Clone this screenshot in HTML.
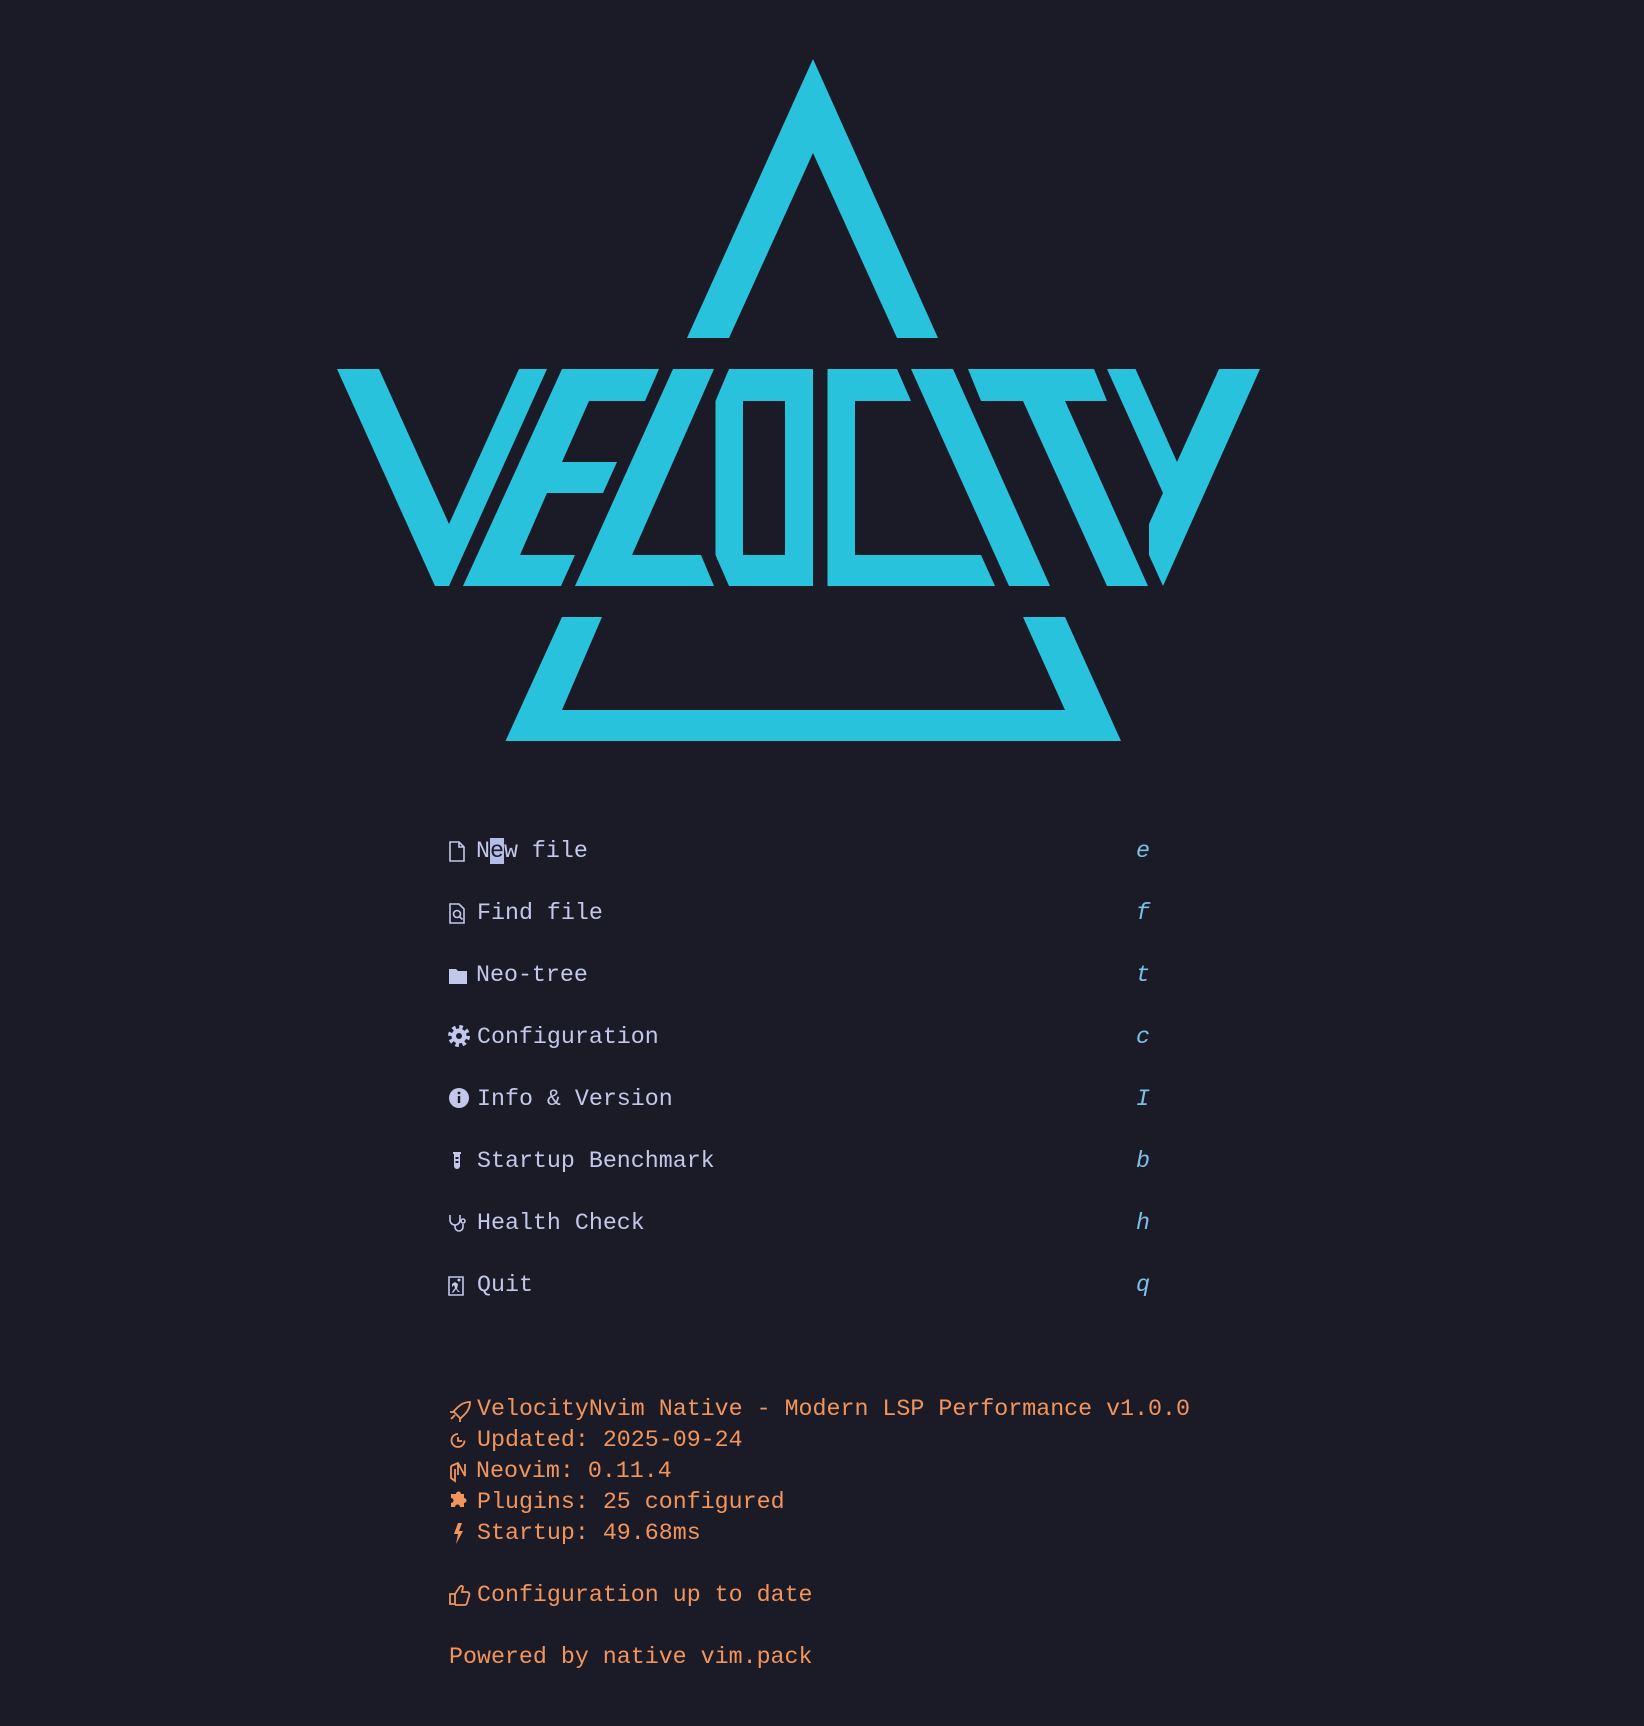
<!DOCTYPE html>
<html><head><meta charset="utf-8"><style>
html,body{margin:0;padding:0;background:#1b1b27;}
body{width:1644px;height:1726px;position:relative;overflow:hidden;font-family:"Liberation Mono","DejaVu Sans Mono",monospace;font-size:23.3px;}
.r{position:absolute;height:31px;line-height:31px;white-space:pre;}
.m{color:#c3c8ea;}
.k{color:#7cc0e6;font-style:italic;}
.o{color:#f2955c;}
.cur{background:#b4bce8;color:#1b1b27;}
</style></head><body>
<svg width="1644" height="1726" style="position:absolute;left:0;top:0" viewBox="0 0 1644 1726">
<g fill="#29c2dd">
<polygon points="813,59 938,338 897,338 813,153 729,338 687,338"/>
<polygon points="337,369 379,369 449,524 519,369 547,369 449,586 435,586"/>
<polygon points="562,369 659,369 645,401 589,401 562,462 617,462 603,493 547,493 520,555 575,555 561,586 463,586"/>
<polygon points="673,369 714,369 632,555 701,555 714,586 575,586"/>
<path fill-rule="evenodd" d="M729,369 H813 V586 H729 L715.5,555 V401 Z M743,401 H785 V555 H743 Z"/>
<polygon points="827.5,369 897,369 911,401 855,401 855,555 981,555 995,586 827.5,586"/>
<polygon points="911,369 953,369 1050,586 1009,586"/>
<polygon points="968,369 1094,369 1107,401 1065,401 1148,586 1107,586 1023,401 981,401"/>
<polygon points="1107,369 1135.5,369 1177,462 1219,369 1260,369 1163,586 1149,555 1149,524 1163,493"/>
<polygon points="562,617 602,617 562,710 1065,710 1023,617 1065,617 1121,741 505.5,741"/>
</g>
<g transform="translate(0,2)">
<g fill="none" stroke="#c3c8ea" stroke-width="1.6">
<path d="M450,840 h9 l5,5 v14 h-14 z M459,840 v5 h5"/>
<path d="M450,902 h9 l5,5 v14 h-14 z"/><circle cx="457" cy="912" r="3.5"/><path d="M459.5,914.5 l3,3"/>
<path d="M450,1213 v5 a5,5 0 0 0 10,0 v-5 M455,1223 v2 a4,4 0 0 0 8,0 v-3"/><circle cx="463" cy="1219" r="2"/>
<path d="M449,1275 h14 v18 h-14 z"/>
</g>
<g fill="#c3c8ea">
<path d="M449,967 h7 l2,2 h9 v13 h-18 z"/>
<circle cx="459" cy="1034" r="7.5"/>
<circle cx="459" cy="1034" r="9" fill="none" stroke="#c3c8ea" stroke-width="4" stroke-dasharray="3.5 3.57"/>
<circle cx="459" cy="1096" r="10"/>
<path d="M453,1150 h8 v2 h-1 v12 a3,3 0 0 1 -6,0 v-12 h-1 z"/>
<path d="M455,1280 l3,2 -1,5 3,3 -2,0 -2,-3 -3,4 -1,-1 3,-4 -1,-3 -2,2 v-3 z"/><circle cx="459" cy="1278" r="1.5"/>
</g>
<g fill="#1b1b27">
<circle cx="459" cy="1034" r="3"/>
<rect x="457.8" y="1094" width="2.4" height="7"/><circle cx="459" cy="1091" r="1.4"/>
<rect x="455.5" y="1155" width="3" height="2"/><rect x="455.5" y="1159" width="3" height="2"/>
</g>
<g fill="none" stroke="#f2955c" stroke-width="1.8">
<path d="M451,1417 l4,-4 M450,1410 l3,0 5,-5 c4,-4 9,-5 12,-5 c0,3 -1,8 -5,12 l-5,5 0,3 M453,1409 l8,8"/>
<path d="M458,1432 a6.5,6.5 0 1 0 6.5,6.5 M458,1435 v4 h4"/>
<path d="M451,1464 l7,-3 7,13 v-12 M451,1464 v12 l4,3 v-12 M458,1461 v12"/>
<path d="M450,1592 h5 v10 h-5 z M455,1592 l4,-6 c1,-2 3,-3 4,-1 l-1,5 h5 c2,0 3,2 2,4 l-2,7 c0,1 -1,2 -3,2 h-9"/>
</g>
<g fill="#f2955c">
<path d="M451,1492 h5 a2.5,2.5 0 0 1 5,0 h3 v4 a2.5,2.5 0 0 1 0,5 v4 h-4 a2.5,2.5 0 0 0 -5,0 h-4 v-4 a2.5,2.5 0 0 0 0,-5 z"/>
<path d="M458,1521 l-4,11 h4 l-2,10 7,-13 h-4 l3,-8 z"/>
</g>
</g>
</svg>

<div class="r m" style="left:476px;top:836px">N<span class="cur">e</span>w file</div>
<div class="r m" style="left:477px;top:898px">Find file</div>
<div class="r m" style="left:476px;top:960px">Neo-tree</div>
<div class="r m" style="left:477px;top:1022px">Configuration</div>
<div class="r m" style="left:477px;top:1084px">Info &amp; Version</div>
<div class="r m" style="left:477px;top:1146px">Startup Benchmark</div>
<div class="r m" style="left:477px;top:1208px">Health Check</div>
<div class="r m" style="left:477px;top:1270px">Quit</div>

<div class="r k" style="left:1136px;top:836px">e</div>
<div class="r k" style="left:1136px;top:898px">f</div>
<div class="r k" style="left:1136px;top:960px">t</div>
<div class="r k" style="left:1136px;top:1022px">c</div>
<div class="r k" style="left:1136px;top:1084px">I</div>
<div class="r k" style="left:1136px;top:1146px">b</div>
<div class="r k" style="left:1136px;top:1208px">h</div>
<div class="r k" style="left:1136px;top:1270px">q</div>

<div class="r o" style="left:477px;top:1394px">VelocityNvim Native - Modern LSP Performance v1.0.0</div>
<div class="r o" style="left:477px;top:1425px">Updated: 2025-09-24</div>
<div class="r o" style="left:476px;top:1456px">Neovim: 0.11.4</div>
<div class="r o" style="left:477px;top:1487px">Plugins: 25 configured</div>
<div class="r o" style="left:477px;top:1518px">Startup: 49.68ms</div>
<div class="r o" style="left:477px;top:1580px">Configuration up to date</div>
<div class="r o" style="left:449px;top:1642px">Powered by native vim.pack</div>
</body></html>
